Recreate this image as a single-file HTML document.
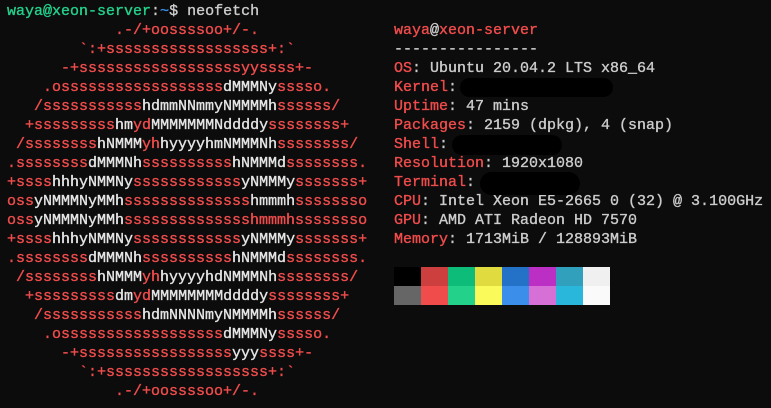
<!DOCTYPE html>
<html><head><meta charset="utf-8"><style>
html,body{margin:0;padding:0;width:771px;height:408px;overflow:hidden;background:#0c0c0c;}
.t,.i{font-family:"Liberation Mono",monospace;font-size:15px;line-height:19px;white-space:pre;color:#cccccc;-webkit-text-stroke:0.35px currentColor;}
.t{position:absolute;left:7px;top:2px;}
.i{position:absolute;left:394px;top:21px;}
.r{color:#f14c4c}.w{color:#e5e5e5}.g{color:#23d18b}.b{color:#3b8eea}
.blob{position:absolute;background:#000;border-radius:12px;}
.sw{position:absolute;width:27px;height:19px;}
</style></head><body>
<div class="t"><span class="g">waya@xeon-server</span>:<span class="b">~</span>$ neofetch
<span class="r">            .-/+oossssoo+/-.
        `:+ssssssssssssssssss+:`
      -+ssssssssssssssssssyyssss+-
    .ossssssssssssssssss</span><span class="w">dMMMNy</span><span class="r">sssso.
   /sssssssssss</span><span class="w">hdmmNNmmyNMMMMh</span><span class="r">ssssss/
  +sssssssss</span><span class="w">hm</span><span class="r">yd</span><span class="w">MMMMMMMNddddy</span><span class="r">ssssssss+
 /ssssssss</span><span class="w">hNMMM</span><span class="r">yh</span><span class="w">hyyyyhmNMMMNh</span><span class="r">ssssssss/
.ssssssss</span><span class="w">dMMMNh</span><span class="r">ssssssssss</span><span class="w">hNMMMd</span><span class="r">ssssssss.
+ssss</span><span class="w">hhhyNMMNy</span><span class="r">ssssssssssss</span><span class="w">yNMMMy</span><span class="r">sssssss+
oss</span><span class="w">yNMMMNyMMh</span><span class="r">ssssssssssssss</span><span class="w">hmmmh</span><span class="r">ssssssso
oss</span><span class="w">yNMMMNyMMh</span><span class="r">sssssssssssssshmmmhssssssso
+ssss</span><span class="w">hhhyNMMNy</span><span class="r">ssssssssssss</span><span class="w">yNMMMy</span><span class="r">sssssss+
.ssssssss</span><span class="w">dMMMNh</span><span class="r">ssssssssss</span><span class="w">hNMMMd</span><span class="r">ssssssss.
 /ssssssss</span><span class="w">hNMMM</span><span class="r">yh</span><span class="w">hyyyyhdNMMMNh</span><span class="r">ssssssss/
  +sssssssss</span><span class="w">dm</span><span class="r">yd</span><span class="w">MMMMMMMMddddy</span><span class="r">ssssssss+
   /sssssssssss</span><span class="w">hdmNNNNmyNMMMMh</span><span class="r">ssssss/
    .ossssssssssssssssss</span><span class="w">dMMMNy</span><span class="r">sssso.
      -+sssssssssssssssss</span><span class="w">yyy</span><span class="r">ssss+-
        `:+ssssssssssssssssss+:`
            .-/+oossssoo+/-.</span></div>
<div class="i"><span class="r">waya</span>@<span class="r">xeon-server</span>
----------------
<span class="r">OS</span>: Ubuntu 20.04.2 LTS x86_64
<span class="r">Kernel</span>:
<span class="r">Uptime</span>: 47 mins
<span class="r">Packages</span>: 2159 (dpkg), 4 (snap)
<span class="r">Shell</span>:
<span class="r">Resolution</span>: 1920x1080
<span class="r">Terminal</span>:
<span class="r">CPU</span>: Intel Xeon E5-2665 0 (32) @ 3.100GHz
<span class="r">GPU</span>: AMD ATI Radeon HD 7570
<span class="r">Memory</span>: 1713MiB / 128893MiB</div>
<div class="blob" style="left:460px;top:78px;width:153px;height:19px;"></div>
<div class="blob" style="left:452px;top:135px;width:110px;height:20px;"></div>
<div class="blob" style="left:480px;top:172px;width:100px;height:23px;"></div>
<div class="sw" style="left:394px;top:267px;background:#000000"></div>
<div class="sw" style="left:421px;top:267px;background:#cd3f3f"></div>
<div class="sw" style="left:448px;top:267px;background:#0dbc79"></div>
<div class="sw" style="left:475px;top:267px;background:#e0dc40"></div>
<div class="sw" style="left:502px;top:267px;background:#2472c8"></div>
<div class="sw" style="left:529px;top:267px;background:#bc2fc5"></div>
<div class="sw" style="left:556px;top:267px;background:#30a0bd"></div>
<div class="sw" style="left:583px;top:267px;background:#f0f0f0"></div>
<div class="sw" style="left:394px;top:286px;background:#666666"></div>
<div class="sw" style="left:421px;top:286px;background:#f14c4c"></div>
<div class="sw" style="left:448px;top:286px;background:#23d18b"></div>
<div class="sw" style="left:475px;top:286px;background:#fafa5a"></div>
<div class="sw" style="left:502px;top:286px;background:#3b8eea"></div>
<div class="sw" style="left:529px;top:286px;background:#d670d6"></div>
<div class="sw" style="left:556px;top:286px;background:#29b8db"></div>
<div class="sw" style="left:583px;top:286px;background:#fafafa"></div>
</body></html>
